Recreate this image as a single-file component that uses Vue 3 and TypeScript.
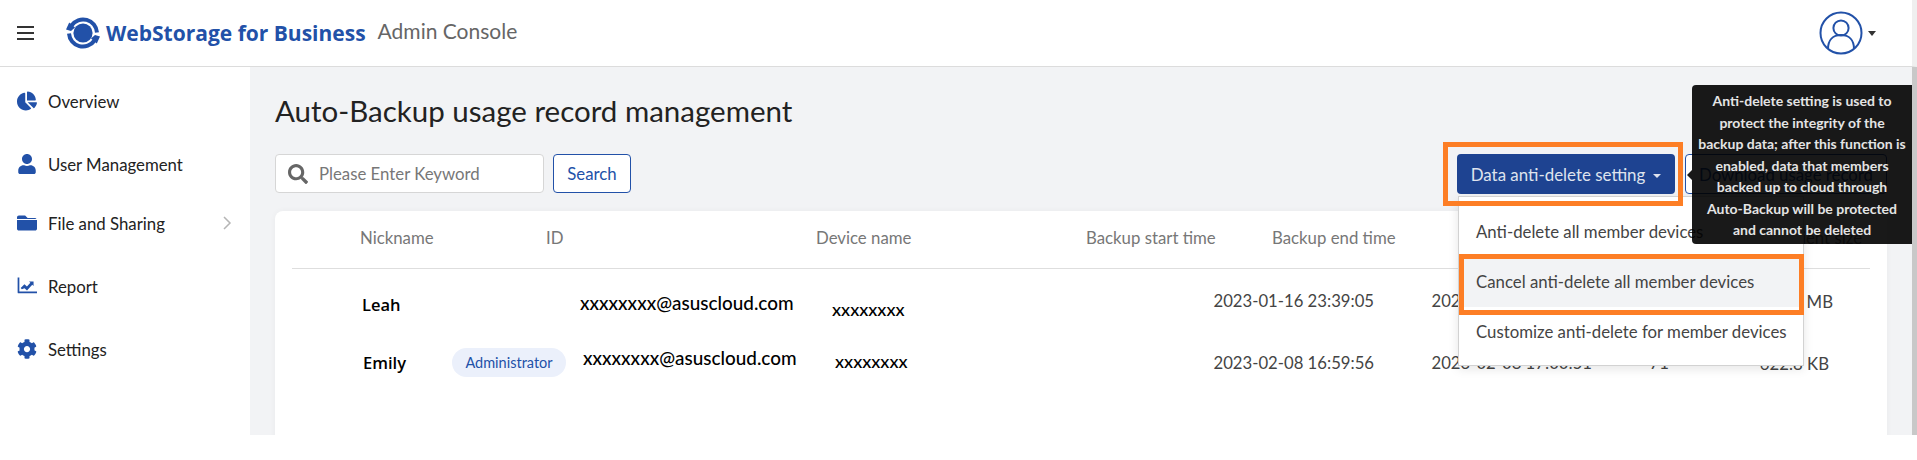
<template>
  <div class="page">
    <header class="topbar">
      <div class="hamburger"><span></span><span></span><span></span></div>
      <svg class="logo" viewBox="0 0 34 34">
        <circle cx="17" cy="17" r="9.6" fill="#2251a8" />
        <path d="M5.5 9.5A14 14 0 0 1 31 16.5" fill="none" stroke="#2251a8" stroke-width="4" />
        <path d="M28.5 24.5A14 14 0 0 1 3 17.5" fill="none" stroke="#2251a8" stroke-width="4" />
        <path d="M0 13.5L3.2 6.5L9 11.5L5 15Z" fill="#2251a8" />
        <path d="M34 20.5L30.8 27.5L25 22.5L29 19Z" fill="#2251a8" />
      </svg>
      <span class="brand">WebStorage for Business</span>
      <span class="console">Admin Console</span>
      <div class="account">
        <svg class="avatar" viewBox="0 0 44 44">
          <circle cx="22" cy="22" r="20.5" fill="none" stroke="#2251a8" stroke-width="2" />
          <circle cx="22" cy="17" r="7.6" fill="none" stroke="#2251a8" stroke-width="2" />
          <path d="M9 38C9 29 14 24 22 24S35 29 35 38" fill="none" stroke="#2251a8" stroke-width="2" />
        </svg>
        <span class="account-caret"></span>
      </div>
    </header>

    <div class="body">
      <nav class="sidebar">
        <div v-for="item in navItems" :key="item.label" class="nav-item" :class="item.cls">
          <svg class="nav-icon" :viewBox="item.box"><path :d="item.path" fill="#2251a8" /></svg>
          <span>{{ item.label }}</span>
          <svg v-if="item.more" class="nav-more" viewBox="0 0 10 16">
            <path d="M2 2l6 6-6 6" fill="none" stroke="#b5b5b5" stroke-width="1.5" />
          </svg>
        </div>
      </nav>

      <main class="main">
        <h1 class="title">Auto-Backup usage record management</h1>

        <div class="toolbar">
          <div class="search-box">
            <svg class="search-icon" viewBox="0 0 512 512"><path :d="searchPath" fill="#666" /></svg>
            <span>Please Enter Keyword</span>
          </div>
          <button class="btn-outline search-btn">Search</button>

          <div class="actions">
            <div class="anti-delete">
              <button class="btn-primary">Data anti-delete setting<i class="btn-caret"></i></button>
              <div class="orange-frame button-frame"></div>
              <div class="dropdown">
                <div class="drop-item">Anti-delete all member devices</div>
                <div class="drop-item active">Cancel anti-delete all member devices</div>
                <div class="drop-item">Customize anti-delete for member devices</div>
                <div class="orange-frame item-frame"></div>
              </div>
            </div>
            <button class="btn-outline download-btn">Download usage record</button>
            <div class="tooltip">
              <i class="tooltip-arrow"></i>
              Anti-delete setting is used to protect the integrity of the backup data; after this function is enabled, data that members backed up to cloud through Auto-Backup will be protected and cannot be deleted
            </div>
          </div>
        </div>

        <section class="card">
          <div class="table-head">
            <span>Nickname</span>
            <span>ID</span>
            <span>Device name</span>
            <span>Backup start time</span>
            <span>Backup end time</span>
            <span>Client size</span>
          </div>
          <div v-for="row in rows" :key="row.name" class="table-row" :class="row.cls">
            <span class="c-name">{{ row.name }}</span>
            <span class="c-role"><em v-if="row.role" class="badge">{{ row.role }}</em></span>
            <span class="c-email">{{ row.email }}</span>
            <span class="c-device">{{ row.device }}</span>
            <span class="c-date">{{ row.start }}</span>
            <span class="c-date">{{ row.end }}</span>
            <span class="c-date">{{ row.count }}</span>
            <span class="c-date c-size">{{ row.size }}</span>
          </div>
        </section>
      </main>
      <div class="scroll-thumb"></div>
    </div>
  </div>
</template>

<script setup lang="ts">
interface NavItem {
  label: string
  box: string
  path: string
  cls?: string
  more?: boolean
}

const searchPath =
  'M505 442.7L405.3 343c-4.5-4.5-10.6-7-17-7H372c27.6-35.3 44-79.7 44-128C416 93.1 322.9 0 208 0S0 93.1 0 208s93.1 208 208 208c48.3 0 92.7-16.4 128-44v16.3c0 6.4 2.5 12.5 7 17l99.7 99.7c9.4 9.4 24.6 9.4 33.9 0l28.3-28.3c9.4-9.4 9.4-24.6.1-34zM208 336c-70.7 0-128-57.2-128-128 0-70.7 57.2-128 128-128 70.7 0 128 57.2 128 128 0 70.7-57.2 128-128 128z'

const navItems: NavItem[] = [
  {
    label: 'Overview',
    box: '0 0 544 512',
    path: 'M527.79 288H290.5l158.03 158.03c6.04 6.04 15.98 6.53 22.19.68 38.7-36.46 65.32-85.61 73.13-140.86 1.34-9.46-6.51-17.85-16.06-17.85zm-15.83-64.8C503.72 103.74 408.26 8.28 288.8.04 279.68-.59 272 7.1 272 16.24V240h223.77c9.14 0 16.82-7.68 16.19-16.8zM224 288V50.71c0-9.55-8.39-17.4-17.84-16.06C86.99 51.49-4.1 155.6.14 280.37 4.5 408.51 114.83 513.59 243.03 511.98c50.4-.63 96.97-16.87 135.26-44.03 7.9-5.6 8.42-17.23 1.57-24.08L224 288z'
  },
  {
    label: 'User Management',
    box: '0 0 448 512',
    path: 'M224 256c70.7 0 128-57.3 128-128S294.7 0 224 0 96 57.3 96 128s57.3 128 128 128zm89.6 32h-16.7c-22.2 10.2-46.9 16-72.9 16s-50.6-5.8-72.9-16h-16.7C60.2 288 0 348.2 0 422.4V464c0 26.5 21.5 48 48 48h352c26.5 0 48-21.5 48-48v-41.6c0-74.2-60.2-134.4-134.4-134.4z'
  },
  {
    label: 'File and Sharing',
    box: '0 0 512 512',
    cls: 'nav-file',
    more: true,
    path: 'M464 152H0V112C0 85.5 21.5 64 48 64h160l64 64h192c15 0 28 6 36 16zM0 176h512v224c0 26.5-21.5 48-48 48H48c-26.5 0-48-21.5-48-48z'
  },
  {
    label: 'Report',
    box: '0 0 512 512',
    path: 'M16 40h44v356h452v48H40c-13 0-24-11-24-24zM124 340l-30-30 96-100 64 56 88-96-34-30h116v116l-34-34-134 148-64-56z'
  },
  {
    label: 'Settings',
    box: '0 0 512 512',
    path: 'M487.4 315.7l-42.6-24.6c4.3-23.2 4.3-47 0-70.2l42.6-24.6c4.9-2.8 7.1-8.6 5.5-14-11.1-35.6-30-67.8-54.7-94.6-3.8-4.1-10-5.1-14.8-2.3L380.8 110c-17.9-15.4-38.5-27.3-60.8-35.1V25.8c0-5.6-3.9-10.5-9.4-11.7-36.7-8.2-74.3-7.8-109.2 0-5.5 1.2-9.4 6.1-9.4 11.7V75c-22.2 7.9-42.8 19.8-60.8 35.1L88.7 85.5c-4.9-2.8-11-1.9-14.8 2.3-24.7 26.7-43.6 58.9-54.7 94.6-1.7 5.4.6 11.2 5.5 14L67.3 221c-4.3 23.2-4.3 47 0 70.2l-42.6 24.6c-4.9 2.8-7.1 8.6-5.5 14 11.1 35.6 30 67.8 54.7 94.6 3.8 4.1 10 5.1 14.8 2.3l42.6-24.6c17.9 15.4 38.5 27.3 60.8 35.1v49.2c0 5.6 3.9 10.5 9.4 11.7 36.7 8.2 74.3 7.8 109.2 0 5.5-1.2 9.4-6.1 9.4-11.7v-49.2c22.2-7.9 42.8-19.8 60.8-35.1l42.6 24.6c4.9 2.8 11 1.9 14.8-2.3 24.7-26.7 43.6-58.9 54.7-94.6 1.5-5.5-.7-11.3-5.6-14.1zM256 336c-44.1 0-80-35.9-80-80s35.9-80 80-80 80 35.9 80 80-35.9 80-80 80z'
  }
]

const rows = [
  {
    name: 'Leah',
    role: '',
    email: 'xxxxxxxx@asuscloud.com',
    device: 'xxxxxxxx',
    start: '2023-01-16 23:39:05',
    end: '2023-01-16 23:42:10',
    count: '12',
    size: '1.2 MB',
    cls: 'row-leah'
  },
  {
    name: 'Emily',
    role: 'Administrator',
    email: 'xxxxxxxx@asuscloud.com',
    device: 'xxxxxxxx',
    start: '2023-02-08 16:59:56',
    end: '2023-02-08 17:00:51',
    count: '71',
    size: '622.8 KB',
    cls: 'row-emily'
  }
]
</script>

<style>
html,
body {
  margin: 0;
  background: #fff;
  overflow: hidden;
}
</style>

<style scoped>
.page {
  width: 1917px;
  height: 435px;
  overflow: hidden;
  display: flex;
  flex-direction: column;
  font-family: Lato, "Liberation Sans", sans-serif;
  color: #333;
}

.topbar {
  flex: 0 0 67px;
  box-sizing: border-box;
  display: flex;
  align-items: center;
  background: #fff;
  border-bottom: 1px solid #dcdcdc;
  border-right: 5px solid #efefef;
  padding-left: 17px;
}

.hamburger {
  width: 17px;
  display: flex;
  flex-direction: column;
  gap: 3.5px;
}

.hamburger span {
  height: 2.5px;
  background: #333;
}

.logo {
  width: 34px;
  height: 34px;
  margin-left: 32px;
}

.brand {
  margin-left: 6px;
  font: 700 21px "Open Sans", sans-serif;
  color: #2251a8;
}

.console {
  margin-left: 12px;
  margin-top: -5px;
  font-size: 21px;
  color: #666;
}

.account {
  margin-left: auto;
  margin-right: 36px;
  display: flex;
  align-items: center;
  gap: 5px;
}

.avatar {
  width: 44px;
  height: 44px;
}

.account-caret {
  width: 0;
  height: 0;
  border-left: 4.5px solid transparent;
  border-right: 4.5px solid transparent;
  border-top: 5px solid #333;
}

.body {
  flex: 1;
  display: flex;
  min-height: 0;
}

.sidebar {
  flex: 0 0 250px;
  background: #fff;
  padding-top: 2.5px;
  box-sizing: border-box;
}

.nav-item {
  height: 63px;
  display: flex;
  align-items: center;
  padding-left: 17px;
  font-size: 16.8px;
  color: #222;
}

.nav-file {
  margin-top: -4px;
}

.nav-icon {
  width: 20px;
  height: 20px;
  margin-right: 11px;
}

.nav-more {
  width: 10px;
  height: 16px;
  margin-left: auto;
  margin-right: 18px;
}

.main {
  flex: 1;
  background: #f2f3f5;
  padding: 0 25px;
  min-width: 0;
}

.title {
  margin: 25px 0 0;
  font-size: 29.5px;
  line-height: 38px;
  font-weight: 400;
  color: #222;
}

.toolbar {
  display: flex;
  align-items: flex-start;
  margin-top: 24px;
  height: 40px;
}

.search-box {
  width: 269px;
  height: 39px;
  box-sizing: border-box;
  display: flex;
  align-items: center;
  background: #fff;
  border: 1px solid #d6d6d6;
  border-radius: 4px;
  padding-left: 12px;
  font-size: 16.8px;
  color: #777;
}

.search-icon {
  width: 20px;
  height: 20px;
  margin-right: 11px;
}

.btn-outline {
  height: 40px;
  box-sizing: border-box;
  background: #fff;
  border: 1px solid #2251a8;
  border-radius: 4px;
  color: #2251a8;
  font: 16.8px Lato, sans-serif;
  padding: 0;
}

.search-btn {
  width: 78px;
  height: 39px;
  margin-left: 9px;
}

.actions {
  margin-left: auto;
  display: flex;
  gap: 10px;
  position: relative;
}

.anti-delete {
  position: relative;
}

.btn-primary {
  width: 218px;
  height: 40px;
  background: #1e4391;
  border: 0;
  border-radius: 4px;
  color: #dfe3ee;
  font: 16.9px Lato, sans-serif;
  padding: 0;
}

.btn-caret {
  display: inline-block;
  margin-left: 8px;
  vertical-align: middle;
  border-left: 4px solid transparent;
  border-right: 4px solid transparent;
  border-top: 4px solid #dfe3ee;
}

.orange-frame {
  position: absolute;
  box-sizing: border-box;
  border: 5px solid #fd7e25;
  pointer-events: none;
}

.button-frame {
  left: -14px;
  top: -12px;
  width: 240px;
  height: 64px;
  z-index: 3;
}

.download-btn {
  width: 202px;
}

.dropdown {
  position: absolute;
  z-index: 2;
  left: 1px;
  top: 42px;
  width: 346px;
  height: 170px;
  box-sizing: border-box;
  padding-top: 10px;
  background: #fff;
  border: 1px solid #d2d2d2;
  box-shadow: 0 3px 10px rgba(0, 0, 0, 0.1);
  font-size: 16.8px;
  color: #444;
}

.drop-item {
  height: 50px;
  line-height: 50px;
  padding-left: 17px;
  white-space: nowrap;
}

.drop-item.active {
  background: #f2f3f5;
}

.item-frame {
  left: 0;
  top: 57px;
  width: 345px;
  height: 61px;
}

.tooltip {
  position: absolute;
  z-index: 4;
  left: 235px;
  top: -69px;
  width: 220px;
  height: 159px;
  box-sizing: border-box;
  padding: 5px 6px 0;
  background: rgba(0, 0, 0, 0.9);
  border-radius: 4px 0 0 4px;
  color: #e4e4e4;
  font-size: 14px;
  font-weight: 700;
  line-height: 21.5px;
  text-align: center;
}

.tooltip-arrow {
  position: absolute;
  left: -5px;
  top: 85px;
  border-top: 5px solid transparent;
  border-bottom: 5px solid transparent;
  border-right: 5px solid rgba(0, 0, 0, 0.9);
}

.card {
  margin-top: 17px;
  height: 260px;
  background: #fff;
  border-radius: 8px 8px 0 0;
  box-shadow: 0 0 6px rgba(0, 0, 0, 0.04);
  padding: 0 17px;
  position: relative;
}

.table-head {
  height: 58px;
  box-sizing: border-box;
  display: grid;
  grid-template-columns: 186px 270px 270px 186px 1fr auto;
  align-items: center;
  padding: 0 8px 4px 68px;
  border-bottom: 1px solid #dedede;
  font-size: 16.8px;
  color: #777;
}

.table-row {
  display: grid;
  grid-template-columns: 90px 128px 252px 380px 218px 218px 100px 1fr;
  padding-left: 70px;
  height: 62px;
  font: 15.5px Lato, sans-serif;
  color: #000;
}

.table-row span {
  white-space: nowrap;
}

.c-name {
  font: 600 16.5px "Open Sans", sans-serif;
  margin-top: 24px;
}

.c-email {
  font: 500 18.9px Lato, sans-serif;
  margin-top: 22px;
}

.c-device {
  font: 500 18px Lato, sans-serif;
  margin-top: 29px;
}

.c-date {
  color: #444;
  font: 16.7px Lato, sans-serif;
  margin-top: 22px;
  margin-left: 1.5px;
}

.table-row .c-size {
  font-size: 16.8px;
  text-align: right;
  padding-right: 37px;
}

.row-emily {
  padding-left: 71px;
}

.row-emily .c-role {
  margin-left: -1px;
}

.row-emily .c-email {
  margin-top: 15px;
  padding-left: 2px;
}

.row-emily .c-device {
  margin-top: 19px;
  padding-left: 2px;
}

.row-emily .c-name {
  margin-top: 20px;
}

.row-emily .c-date {
  margin-top: 22px;
  margin-left: 0.5px;
}

.row-emily .c-size {
  padding-right: 41px;
}

.badge {
  display: inline-block;
  margin-top: 17px;
  width: 114px;
  height: 29px;
  line-height: 29px;
  text-align: center;
  border-radius: 15px;
  background: #ebf0fb;
  color: #2251a8;
  font-style: normal;
  font-size: 14.5px;
}

.scroll-thumb {
  flex: 0 0 5px;
  background: #c8c8c8;
}
</style>
